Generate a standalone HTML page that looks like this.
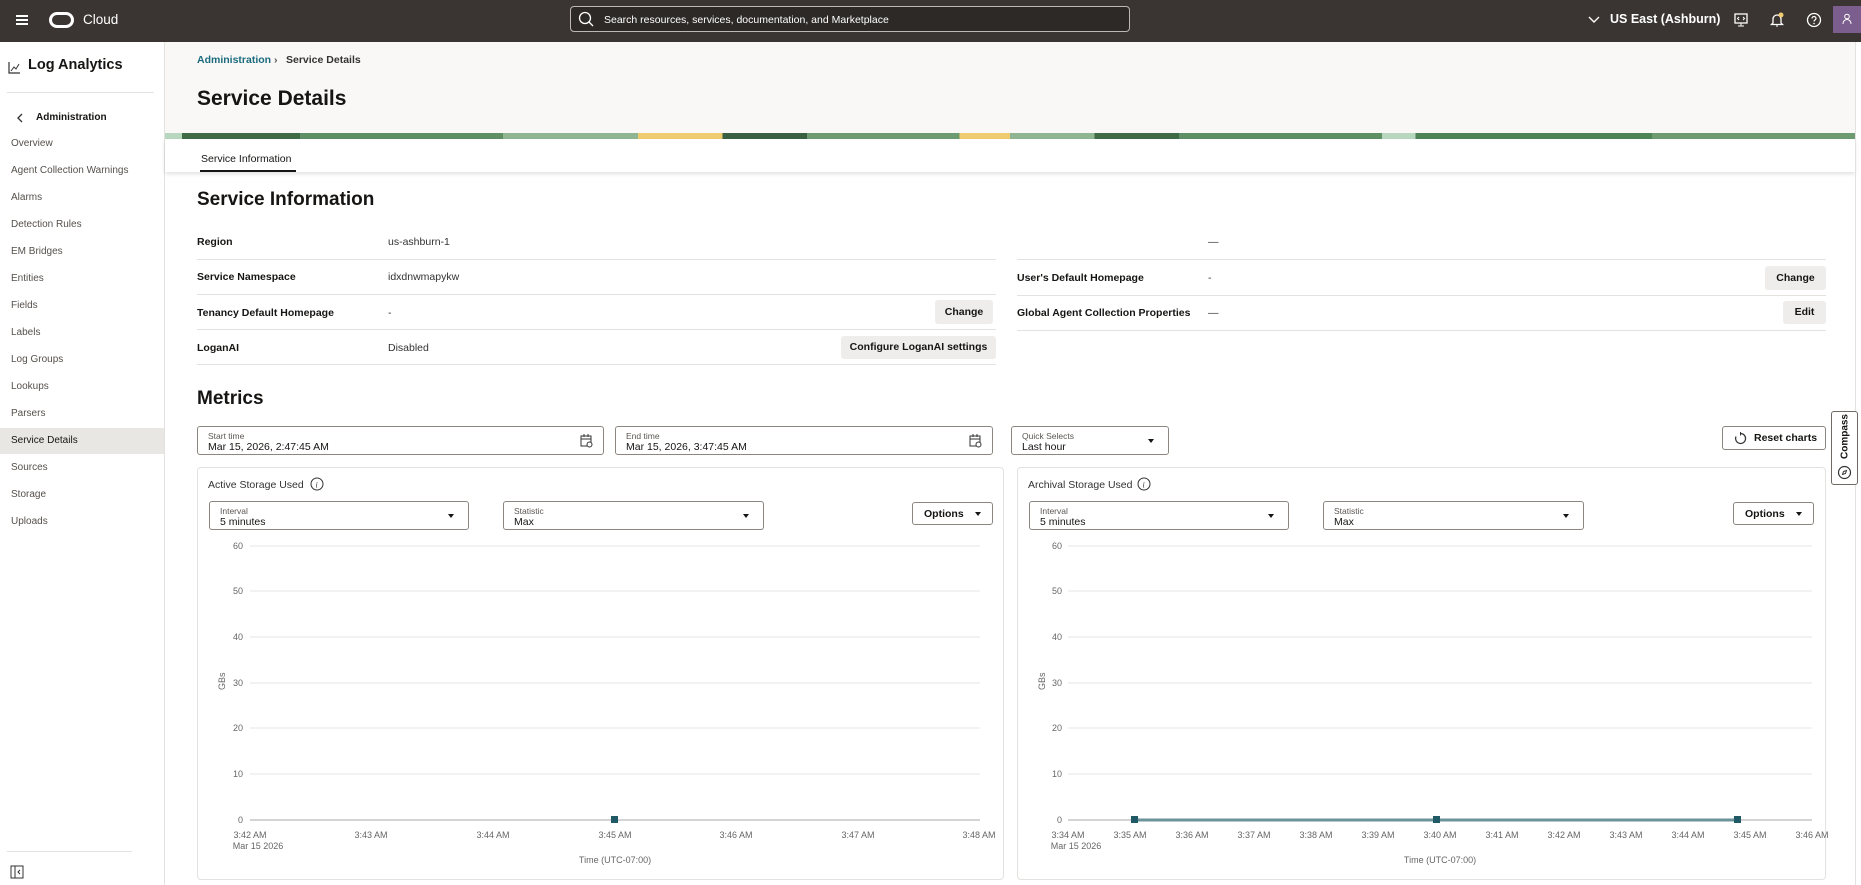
<!DOCTYPE html>
<html><head><meta charset="utf-8"><style>
*{box-sizing:border-box;margin:0;padding:0}
body{width:1861px;height:885px;overflow:hidden;font-family:"Liberation Sans",sans-serif;color:#161513;background:#fff;position:relative}
.a{position:absolute;white-space:nowrap}
.hdr{left:0;top:0;width:1861px;height:42px;background:#3a3532}
.side{left:0;top:42px;width:165px;height:843px;background:#fff;border-right:1px solid #e4e2df}
.nav{left:11px;font-size:10px;color:#55504b}
.lbl{font-size:10.5px;font-weight:bold;color:#161513}
.val{font-size:10.5px;color:#333}
.hr{height:1px;background:#e4e2df}
.btn{background:#efedeb;border-radius:3px;font-size:10.5px;font-weight:bold;color:#161513;text-align:center}
.box{border:1px solid #8b8680;border-radius:3px;background:#fff}
.sm{font-size:8.5px;color:#5b5652;position:absolute;left:10px;top:4px}
.bg{font-size:10.5px;color:#161513;position:absolute;left:10px;top:14px}
.tri{position:absolute;width:0;height:0;border-left:3.5px solid transparent;border-right:3.5px solid transparent;border-top:4px solid #161513}
.panel{border:1px solid #e4e2df;border-radius:4px;background:#fff}
</style></head><body>
<div class="a hdr"></div>
<div class="a" style="left:16px;top:15px;width:12px;height:2px;background:#fff;box-shadow:0 4px 0 #fff,0 8px 0 #fff"></div>
<div class="a" style="left:49px;top:12px;width:25px;height:16px;border:3px solid #fff;border-radius:8px"></div>
<div class="a" style="left:83px;top:12px;font-size:13.5px;color:#fff">Cloud</div>
<div class="a" style="left:570px;top:6px;width:560px;height:26px;border:1px solid #bdb8b3;border-radius:4px;background:#2d2927"></div>
<svg class="a" style="left:578px;top:11px" width="16" height="16"><circle cx="7" cy="7" r="5.5" fill="none" stroke="#fff" stroke-width="1.3"/><path d="M11 11l4 4" stroke="#fff" stroke-width="1.3"/></svg>
<div class="a" style="left:604px;top:14px;font-size:10.5px;color:#fff">Search resources, services, documentation, and Marketplace</div>
<svg class="a" style="left:1588px;top:15px" width="12" height="10"><path d="M1 2l5 5 5-5" fill="none" stroke="#fff" stroke-width="1.4"/></svg>
<div class="a" style="left:1610px;top:12px;font-size:12.5px;color:#fff;font-weight:bold">US East (Ashburn)</div>
<svg class="a" style="left:1733px;top:12px" width="16" height="16"><rect x="2" y="2" width="12" height="9" fill="none" stroke="#fff" stroke-width="1.3"/><path d="M8 11v3M5 14h6M6 5l-1.5 1.5L6 8M10 5l1.5 1.5L10 8" stroke="#fff" fill="none"/></svg>
<svg class="a" style="left:1769px;top:11px" width="16" height="18"><path d="M4 12V8a4 4 0 018 0v4l1.5 1.5h-11z" fill="none" stroke="#fff" stroke-width="1.3"/><path d="M7 15h2" stroke="#fff"/><circle cx="12" cy="4" r="2.5" fill="#f0cc71"/></svg>
<svg class="a" style="left:1806px;top:12px" width="16" height="16"><circle cx="8" cy="8" r="6.5" fill="none" stroke="#fff" stroke-width="1.3"/><path d="M6 6.5a2 2 0 114 0c0 1.3-2 1.5-2 3" fill="none" stroke="#fff" stroke-width="1.2"/><circle cx="8" cy="11.5" r=".8" fill="#fff"/></svg>
<div class="a" style="left:1833px;top:6px;width:28px;height:27px;background:#7b5e8e"></div>
<svg class="a" style="left:1841px;top:13px" width="12" height="12"><circle cx="6" cy="3.5" r="2.3" fill="none" stroke="#fff"/><path d="M2 11c0-3 2-4.5 4-4.5s4 1.5 4 4.5" fill="none" stroke="#fff"/></svg>

<div class="a side"></div>
<svg class="a" style="left:8px;top:61px" width="13" height="13"><path d="M1 1v11h11" fill="none" stroke="#333" stroke-width="1.2"/><path d="M3 10l3-4 2 2 3-5" fill="none" stroke="#333"/></svg>
<div class="a" style="left:28px;top:57px;font-size:14.5px;font-weight:bold">Log Analytics</div>
<div class="a hr" style="left:7px;top:92px;width:147px"></div>
<svg class="a" style="left:16px;top:113px" width="8" height="10"><path d="M6 1L2 5l4 4" fill="none" stroke="#333" stroke-width="1.3"/></svg>
<div class="a" style="left:36px;top:112px;font-size:10px;font-weight:bold">Administration</div>
<div class="a" style="left:0;top:428px;width:164px;height:26px;background:#e9e7e4"></div>
<div class="a nav" style="top:138px">Overview</div>
<div class="a nav" style="top:165px">Agent Collection Warnings</div>
<div class="a nav" style="top:192px">Alarms</div>
<div class="a nav" style="top:219px">Detection Rules</div>
<div class="a nav" style="top:246px">EM Bridges</div>
<div class="a nav" style="top:273px">Entities</div>
<div class="a nav" style="top:300px">Fields</div>
<div class="a nav" style="top:327px">Labels</div>
<div class="a nav" style="top:354px">Log Groups</div>
<div class="a nav" style="top:381px">Lookups</div>
<div class="a nav" style="top:408px">Parsers</div>
<div class="a nav" style="top:435px;color:#161513">Service Details</div>
<div class="a nav" style="top:462px">Sources</div>
<div class="a nav" style="top:489px">Storage</div>
<div class="a nav" style="top:516px">Uploads</div>
<div class="a hr" style="left:7px;top:851px;width:125px"></div>
<svg class="a" style="left:10px;top:865px" width="14" height="14"><rect x="1" y="1" width="12" height="12" fill="none" stroke="#333"/><path d="M5 1v12M10 5L8 7l2 2" fill="none" stroke="#333"/></svg>

<div class="a" style="left:165px;top:42px;width:1690px;height:91px;background:#f9f8f6"></div>
<div class="a" style="left:197px;top:54px;font-size:10.5px;font-weight:bold;color:#1b6a7d">Administration <span style="color:#555">›</span></div>
<div class="a" style="left:286px;top:54px;font-size:10.5px;font-weight:bold;color:#333">Service Details</div>
<div class="a" style="left:197px;top:87px;font-size:21px;font-weight:bold">Service Details</div>
<div class="a" style="left:165px;top:133px;width:1690px;height:6px;background:linear-gradient(90deg,#b7d8bf 0 1%,#3f6b46 1% 8%,#5f8f64 8% 20%,#8fb592 20% 28%,#f0cc71 28% 33%,#3b5f41 33% 38%,#6e9b71 38% 47%,#f0cc71 47% 50%,#8fb592 50% 55%,#3f6b46 55% 60%,#5f8f64 60% 72%,#b7d8bf 72% 74%,#4e8456 74% 88%,#6e9b71 88% 100%)"></div>
<div class="a" style="left:165px;top:139px;width:1690px;height:33px;background:#fff;box-shadow:0 2px 4px rgba(0,0,0,.12)"></div>
<div class="a" style="left:201px;top:153px;font-size:10.5px;color:#161513">Service Information</div>
<div class="a" style="left:200px;top:170px;width:96px;height:2px;background:#161513"></div>
<div class="a" style="left:1855px;top:42px;width:1px;height:843px;background:#e4e2df"></div>

<div class="a" style="left:197px;top:189px;font-size:19px;font-weight:bold">Service Information</div>
<div class="a lbl" style="left:197px;top:236px">Region</div><div class="a val" style="left:388px;top:236px">us-ashburn-1</div>
<div class="a hr" style="left:197px;top:259px;width:799px"></div>
<div class="a lbl" style="left:197px;top:271px">Service Namespace</div><div class="a val" style="left:388px;top:271px">idxdnwmapykw</div>
<div class="a hr" style="left:197px;top:294px;width:799px"></div>
<div class="a lbl" style="left:197px;top:307px">Tenancy Default Homepage</div><div class="a val" style="left:388px;top:307px">-</div>
<div class="a btn" style="left:935px;top:300px;width:58px;height:24px;line-height:24px">Change</div>
<div class="a hr" style="left:197px;top:329px;width:799px"></div>
<div class="a lbl" style="left:197px;top:342px">LoganAI</div><div class="a val" style="left:388px;top:342px">Disabled</div>
<div class="a btn" style="left:841px;top:336px;width:155px;height:23px;line-height:23px">Configure LoganAI settings</div>
<div class="a hr" style="left:197px;top:364px;width:799px"></div>

<div class="a val" style="left:1208px;top:236px">—</div>
<div class="a hr" style="left:1017px;top:259px;width:809px"></div>
<div class="a lbl" style="left:1017px;top:272px">User's Default Homepage</div><div class="a val" style="left:1208px;top:272px">-</div>
<div class="a btn" style="left:1765px;top:266px;width:61px;height:24px;line-height:24px">Change</div>
<div class="a hr" style="left:1017px;top:295px;width:809px"></div>
<div class="a lbl" style="left:1017px;top:307px">Global Agent Collection Properties</div><div class="a val" style="left:1208px;top:307px">—</div>
<div class="a btn" style="left:1783px;top:301px;width:43px;height:23px;line-height:23px">Edit</div>
<div class="a hr" style="left:1017px;top:330px;width:809px"></div>

<div class="a" style="left:197px;top:388px;font-size:19px;font-weight:bold">Metrics</div>
<div class="a box" style="left:197px;top:426px;width:407px;height:29px"><span class="sm">Start time</span><span class="bg">Mar 15, 2026, 2:47:45 AM</span>
<svg style="position:absolute;right:10px;top:7px" width="13" height="14"><rect x="1" y="2" width="10" height="10" fill="none" stroke="#333"/><path d="M1 5h10M4 0v3M8 0v3" stroke="#333"/><circle cx="9.5" cy="10.5" r="2.5" fill="#fff" stroke="#333"/></svg></div>
<div class="a box" style="left:615px;top:426px;width:378px;height:29px"><span class="sm">End time</span><span class="bg">Mar 15, 2026, 3:47:45 AM</span>
<svg style="position:absolute;right:10px;top:7px" width="13" height="14"><rect x="1" y="2" width="10" height="10" fill="none" stroke="#333"/><path d="M1 5h10M4 0v3M8 0v3" stroke="#333"/><circle cx="9.5" cy="10.5" r="2.5" fill="#fff" stroke="#333"/></svg></div>
<div class="a box" style="left:1011px;top:426px;width:158px;height:29px"><span class="sm">Quick Selects</span><span class="bg">Last hour</span><div class="tri" style="right:14px;top:12px"></div></div>
<div class="a box" style="left:1722px;top:426px;width:104px;height:24px"><svg style="position:absolute;left:11px;top:5px" width="13" height="13"><path d="M6.5 1.5a5 5 0 11-4.5 3" fill="none" stroke="#333" stroke-width="1.2"/><path d="M6.5 0v3.5" stroke="#333"/></svg><span style="position:absolute;left:31px;top:5px;font-size:10.5px;font-weight:bold">Reset charts</span></div>
<div class="a" style="left:1831px;top:411px;width:27px;height:74px;border:1px solid #6f6a65;border-radius:3px;background:#fff"></div>
<div class="a" style="transform:rotate(-90deg);transform-origin:center;font-size:10px;font-weight:bold;width:50px;text-align:center;left:1820px;top:431px">Compass</div>
<svg class="a" style="left:1837px;top:465px" width="15" height="15"><circle cx="7.5" cy="7.5" r="6" fill="none" stroke="#333" stroke-width="1.2"/><path d="M9.5 5.5L6.5 6.5 5.5 9.5 8.5 8.5z" fill="none" stroke="#333"/></svg>

<div class="a panel" style="left:197px;top:467px;width:807px;height:413px"></div>
<div class="a" style="left:208px;top:479px;font-size:10.5px;color:#333">Active Storage Used</div>
<svg class="a" style="left:310px;top:477px" width="14" height="14"><circle cx="7" cy="7" r="6" fill="none" stroke="#333"/><text x="5.5" y="10.5" font-size="8" font-style="italic" font-family="Liberation Serif" fill="#333">i</text></svg>
<div class="a box" style="left:209px;top:501px;width:260px;height:29px"><span class="sm">Interval</span><span class="bg">5 minutes</span><div class="tri" style="right:14px;top:12px"></div></div>
<div class="a box" style="left:503px;top:501px;width:261px;height:29px"><span class="sm">Statistic</span><span class="bg">Max</span><div class="tri" style="right:14px;top:12px"></div></div>
<div class="a box" style="left:912px;top:502px;width:81px;height:23px"><span style="position:absolute;left:11px;top:5px;font-size:10.5px;font-weight:bold">Options</span><div class="tri" style="right:11px;top:9px"></div></div>

<div class="a panel" style="left:1017px;top:467px;width:809px;height:413px"></div>
<div class="a" style="left:1028px;top:479px;font-size:10.5px;color:#333">Archival Storage Used</div>
<svg class="a" style="left:1137px;top:477px" width="14" height="14"><circle cx="7" cy="7" r="6" fill="none" stroke="#333"/><text x="5.5" y="10.5" font-size="8" font-style="italic" font-family="Liberation Serif" fill="#333">i</text></svg>
<div class="a box" style="left:1029px;top:501px;width:260px;height:29px"><span class="sm">Interval</span><span class="bg">5 minutes</span><div class="tri" style="right:14px;top:12px"></div></div>
<div class="a box" style="left:1323px;top:501px;width:261px;height:29px"><span class="sm">Statistic</span><span class="bg">Max</span><div class="tri" style="right:14px;top:12px"></div></div>
<div class="a box" style="left:1733px;top:502px;width:81px;height:23px"><span style="position:absolute;left:11px;top:5px;font-size:10.5px;font-weight:bold">Options</span><div class="tri" style="right:11px;top:9px"></div></div>

<svg class="a" style="left:0;top:0" width="1861" height="885" font-family="Liberation Sans" font-size="9" fill="#666">
<g stroke="#e8e6e3">
<path d="M250 546H980M250 591H980M250 637H980M250 683H980M250 728H980M250 774H980"/>
<path d="M1068 546H1812M1068 591H1812M1068 637H1812M1068 683H1812M1068 728H1812M1068 774H1812"/>
</g>
<path d="M250 820H980M1068 820H1812" stroke="#aaa"/>
<g text-anchor="end">
<text x="243" y="549">60</text><text x="243" y="594">50</text><text x="243" y="640">40</text><text x="243" y="686">30</text><text x="243" y="731">20</text><text x="243" y="777">10</text><text x="243" y="823">0</text>
<text x="1062" y="549">60</text><text x="1062" y="594">50</text><text x="1062" y="640">40</text><text x="1062" y="686">30</text><text x="1062" y="731">20</text><text x="1062" y="777">10</text><text x="1062" y="823">0</text>
</g>
<text transform="translate(225,690) rotate(-90)">GBs</text>
<text transform="translate(1045,690) rotate(-90)">GBs</text>
<g text-anchor="middle">
<text x="250" y="838">3:42 AM</text><text x="258" y="849">Mar 15 2026</text><text x="371" y="838">3:43 AM</text><text x="493" y="838">3:44 AM</text><text x="615" y="838">3:45 AM</text><text x="736" y="838">3:46 AM</text><text x="858" y="838">3:47 AM</text><text x="979" y="838">3:48 AM</text>
<text x="615" y="863">Time (UTC-07:00)</text>
<text x="1068" y="838">3:34 AM</text><text x="1076" y="849">Mar 15 2026</text>
<text x="1130" y="838">3:35 AM</text><text x="1192" y="838">3:36 AM</text><text x="1254" y="838">3:37 AM</text><text x="1316" y="838">3:38 AM</text><text x="1378" y="838">3:39 AM</text><text x="1440" y="838">3:40 AM</text><text x="1502" y="838">3:41 AM</text><text x="1564" y="838">3:42 AM</text><text x="1626" y="838">3:43 AM</text><text x="1688" y="838">3:44 AM</text><text x="1750" y="838">3:45 AM</text><text x="1812" y="838">3:46 AM</text>
<text x="1440" y="863">Time (UTC-07:00)</text>
</g>
<rect x="611" y="816" width="7" height="7" fill="#1f5a66"/>
<path d="M1134 820H1737" stroke="#6b9399" stroke-width="3"/>
<rect x="1131" y="816" width="7" height="7" fill="#1f5a66"/><rect x="1433" y="816" width="7" height="7" fill="#1f5a66"/><rect x="1734" y="816" width="7" height="7" fill="#1f5a66"/>
</svg>
</body></html>
